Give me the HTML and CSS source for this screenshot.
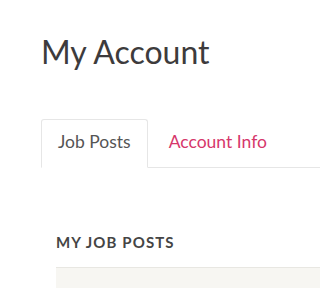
FILE: index.html
```html
<!DOCTYPE html>
<html>
<head>
<meta charset="utf-8">
<link rel="stylesheet" href="styles.css">
</head>
<body>
<div class="page">
  <h1 class="title">My Account</h1>
  <ul class="tabs">
    <li class="tab active"><a>Job Posts</a></li>
    <li class="tab"><a>Account Info</a></li>
  </ul>
  <div class="tab-content">
    <h2 class="section-title">MY JOB POSTS</h2>
    <div class="panel"></div>
  </div>
</div>
</body>
</html>
```
FILE: styles.css
```css
html, body {
  margin: 0;
  padding: 0;
  background: #ffffff;
}
body {
  font-family: Lato, "Open Sans", sans-serif;
}
.page {
  padding: 33px 0 0 41px;
}
.title {
  margin: 0;
  font-size: 32px;
  font-weight: 400;
  line-height: 38px;
  color: #3d3b3c;
}
.tabs {
  list-style: none;
  margin: 48px 0 0 0;
  padding: 0;
  display: flex;
  border-bottom: 1px solid #e6e6e6;
}
.tab {
  margin-bottom: -1px;
}
.tab a {
  display: block;
  padding: 10px 16px 13px;
  font-size: 17.5px;
  line-height: 24px;
  color: #d6376b;
  border: 1px solid transparent;
  border-radius: 3px 3px 0 0;
  margin-right: 4px;
  white-space: nowrap;
}
.tab.active a {
  color: #555555;
  background: #ffffff;
  border-color: #e6e6e6;
  border-bottom-color: #ffffff;
}
.tab-content {
  padding: 64px 0 0 15px;
}
.section-title {
  margin: 0;
  font-size: 15px;
  font-weight: 700;
  letter-spacing: 1.1px;
  line-height: 20px;
  color: #454545;
}
.panel {
  margin-top: 15px;
  height: 20px;
  border-top: 1px solid #e8e7e2;
  background: #f7f6f2;
}
```
